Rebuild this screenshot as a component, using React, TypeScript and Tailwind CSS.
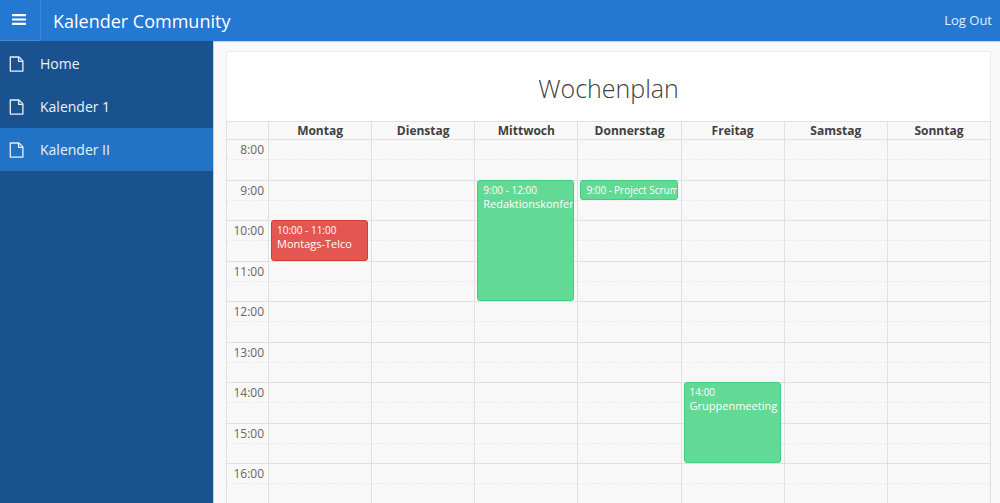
type CalendarEvent = {
  day: string;
  hour: number;
  time: string;
  title: string;
  className: string;
  compact?: boolean;
};

const days = ["Montag", "Dienstag", "Mittwoch", "Donnerstag", "Freitag", "Samstag", "Sonntag"];
const hours = [8, 9, 10, 11, 12, 13, 14, 15, 16];

const green = "border-[#41cd7d] bg-[#62d995]";
const red = "border-[#d63a35] bg-[#e35651]";

const events: CalendarEvent[] = [
  { day: "Montag", hour: 10, time: "10:00 - 11:00", title: "Montags-Telco", className: `h-[41px] ${red}` },
  { day: "Mittwoch", hour: 9, time: "9:00 - 12:00", title: "Redaktionskonferenz", className: `h-[121px] ${green}` },
  { day: "Donnerstag", hour: 9, time: "9:00 -", title: "Project Scrum", className: `h-[20px] ${green}`, compact: true },
  { day: "Freitag", hour: 14, time: "14:00", title: "Gruppenmeeting", className: `h-[81px] ${green}` },
];

const navItems = [
  { label: "Home", active: false },
  { label: "Kalender 1", active: false },
  { label: "Kalender II", active: true },
];

function MenuIcon() {
  return (
    <svg width="14" height="11" viewBox="0 0 14 11" fill="currentColor" aria-hidden="true">
      <rect width="14" height="2.2" rx=".4" />
      <rect y="4.4" width="14" height="2.2" rx=".4" />
      <rect y="8.8" width="14" height="2.2" rx=".4" />
    </svg>
  );
}

function FileIcon() {
  return (
    <svg width="15" height="16" viewBox="0 0 15 16" fill="none" stroke="currentColor" strokeWidth="1.3" strokeLinejoin="round" aria-hidden="true">
      <path d="M1.3 1h8.6l4 3.9v10.2H1.3z" />
      <path d="M9.6 1v4.3h4.2" />
    </svg>
  );
}

function EventCard({ event }: { event: CalendarEvent }) {
  return (
    <div
      className={`absolute -top-px right-[3px] left-[2px] z-10 overflow-hidden rounded-[3px] border pl-[5px] whitespace-nowrap text-white ${event.className}`}
    >
      {event.compact ? (
        <div className="flex gap-0.5 text-[10px] leading-[18px]">
          <span>{event.time}</span>
          <span>{event.title}</span>
        </div>
      ) : (
        <>
          <div className="pt-[2px] text-[10px] leading-[14px]">{event.time}</div>
          <div className="text-[11px] leading-[14px]">{event.title}</div>
        </>
      )}
    </div>
  );
}

export default function App() {
  return (
    <div className="flex h-screen flex-col bg-[#f8f8f8] font-['Open_Sans','Noto_Sans',sans-serif]">
      <header className="flex h-[41px] shrink-0 items-center bg-[#2478d2] text-white">
        <button
          type="button"
          aria-label="Menu"
          className="flex h-full w-[41px] items-center justify-center border-r border-b border-[#3f88d7] pr-0.5 pb-0.5"
        >
          <MenuIcon />
        </button>
        <h1 className="grow pl-3 text-[18px] leading-6">Kalender Community</h1>
        <a href="#logout" className="pr-2 text-[13px] text-[#e3eefa]">
          Log Out
        </a>
      </header>

      <div className="flex min-h-0 grow">
        <nav className="w-[213px] shrink-0 bg-[#1a528f] pt-px">
          <ul>
            {navItems.map((item) => (
              <li key={item.label}>
                <a
                  href="#"
                  aria-current={item.active ? "page" : undefined}
                  className={`flex h-[43px] items-center gap-4 pl-[9px] text-[14px] text-[#eaf2fa] ${item.active ? "bg-[#2273c6]" : ""}`}
                >
                  <FileIcon />
                  <span>{item.label}</span>
                </a>
              </li>
            ))}
          </ul>
        </nav>

        <main className="min-w-0 grow overflow-y-auto border-t border-l border-[#b5d3f3] pt-[9px] pr-[9px] pl-3 [scrollbar-width:none]">
          <section>
            <h2 className="h-[70px] rounded-t-[3px] border border-b-0 border-[#ececec] bg-white pt-[18px] text-center text-[25px] leading-9 font-light text-[#404040]">
              Wochenplan
            </h2>
            <table className="w-full table-fixed border-separate border-spacing-0 border-r border-[#e1e1e1]">
              <thead>
                <tr className="h-[18px]">
                  <td className="w-[42px] border-t border-l border-[#e1e1e1] p-0" />
                  {days.map((day) => (
                    <th
                      key={day}
                      scope="col"
                      className="border-t border-l border-[#e1e1e1] p-0 text-xs leading-[17px] font-bold text-[#404040]"
                    >
                      {day}
                    </th>
                  ))}
                </tr>
              </thead>
              {hours.map((hour) => (
                <tbody key={hour} className="group">
                  <tr className="h-[20px]">
                    <th
                      scope="row"
                      className="border-t border-l border-[#e1e1e1] p-0 pr-1 text-right text-xs leading-[19px] font-normal text-[#666]"
                    >
                      {hour}:00
                    </th>
                    {days.map((day) => (
                      <td key={day} className="relative border-t border-l border-[#e1e1e1] p-0">
                        {events
                          .filter((event) => event.day === day && event.hour === hour)
                          .map((event) => (
                            <EventCard key={event.title} event={event} />
                          ))}
                      </td>
                    ))}
                  </tr>
                  <tr className="h-[20px] group-even:h-[21px]">
                    <td className="border-t border-l border-[#e1e1e1] border-t-[#ebebeb] p-0 [border-top-style:dashed]" />
                    {days.map((day) => (
                      <td
                        key={day}
                        className="border-t border-l border-[#e1e1e1] border-t-[#ebebeb] p-0 [border-top-style:dashed]"
                      />
                    ))}
                  </tr>
                </tbody>
              ))}
            </table>
          </section>
        </main>
      </div>
    </div>
  );
}
